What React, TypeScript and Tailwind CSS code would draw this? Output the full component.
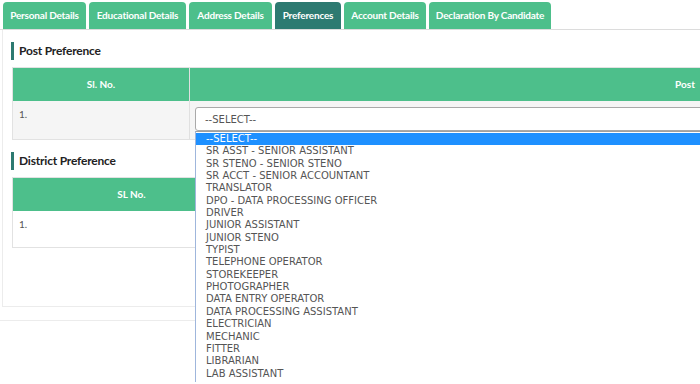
import React from 'react';

const tabs = [
  {label: 'Personal Details', width: 'w-[83px]'},
  {label: 'Educational Details', width: 'w-[97px]'},
  {label: 'Address Details', width: 'w-[83px]'},
  {label: 'Preferences', width: 'w-[66px]', active: true},
  {label: 'Account Details', width: 'w-[82px]'},
  {label: 'Declaration By Candidate', width: 'w-[122px]'}
];

const posts = [
  '--SELECT--',
  'SR ASST - SENIOR ASSISTANT',
  'SR STENO - SENIOR STENO',
  'SR ACCT - SENIOR ACCOUNTANT',
  'TRANSLATOR',
  'DPO - DATA PROCESSING OFFICER',
  'DRIVER',
  'JUNIOR ASSISTANT',
  'JUNIOR STENO',
  'TYPIST',
  'TELEPHONE OPERATOR',
  'STOREKEEPER',
  'PHOTOGRAPHER',
  'DATA ENTRY OPERATOR',
  'DATA PROCESSING ASSISTANT',
  'ELECTRICIAN',
  'MECHANIC',
  'FITTER',
  'LIBRARIAN',
  'LAB ASSISTANT'
];

function SectionTitle({title}: {title: string}) {
  return (
    <div className="-ml-px flex h-[18px] items-center gap-[5px]">
      <div className="h-[18px] w-[3px] bg-[#2d7a71]" />
      <div className="text-[12px] font-bold leading-none tracking-[-0.2px] text-[#222]">{title}</div>
    </div>
  );
}

function PostSelect() {
  return (
    <div className="relative">
      <div className="flex h-[24px] items-center rounded-[3px] border border-[#a9a9a9] bg-white pl-[9px] font-['DejaVu_Sans',sans-serif] text-[10px] text-[#555]">
        --SELECT--
      </div>
      <div className="absolute left-0 top-full z-10 w-full border-l border-t border-l-[#9fb6dc] border-t-[#a0a0a0] bg-white pb-[2px] pt-px font-['DejaVu_Sans',sans-serif] text-[10px] text-[#555]">
        {posts.map((post, i) => (
          <div
            key={post}
            className={`h-[12.35px] pl-[10px] leading-[12.35px] ${
              i === 0 ? 'bg-[#1e90ff] text-white' : ''
            }`}
          >
            {post}
          </div>
        ))}
      </div>
    </div>
  );
}

export default function App() {
  return (
    <div className="relative h-[384px] w-[700px] overflow-hidden bg-white font-['Lato',sans-serif]">
      <div className="flex h-[30px] gap-[3px] border-b border-[#dcdcdc] pl-[3px] pt-[2px]">
        {tabs.map((tab) => (
          <div
            key={tab.label}
            className={`flex h-[27px] shrink-0 items-center justify-center rounded-t-[4px] text-[10px] font-bold tracking-[-0.2px] text-white ${tab.width} ${
              tab.active ? 'bg-[#2d7a71]' : 'bg-[#4dbf8b]'
            }`}
          >
            {tab.label}
          </div>
        ))}
      </div>

      <div className="ml-[2px] h-[277px] w-[1200px] border-b border-l border-[#ececec] pl-[9px] pt-[12px]">
        <SectionTitle title="Post Preference" />
        <div className="mt-[7px] w-[1169px] border border-[#e2e2e2]">
          <div className="flex h-[33px] bg-[#4dbf8b] text-[10px] font-bold text-white">
            <div className="flex w-[177px] items-center justify-center border-r border-[#e0e0e0]">Sl. No.</div>
            <div className="flex flex-1 items-center justify-center">Post</div>
          </div>
          <div className="flex h-[38px] bg-[#f5f5f5] text-[10px] text-[#555]">
            <div className="w-[177px] border-r border-[#e0e0e0] pl-[6px] pt-[6px]">1.</div>
            <div className="flex-1 pl-[5px] pr-[6px] pt-[6px]">
              <PostSelect />
            </div>
          </div>
        </div>

        <div className="mt-[12px]">
          <SectionTitle title="District Preference" />
        </div>
        <div className="mt-[7px] w-[1169px] border border-[#e2e2e2]">
          <div className="flex h-[33px] bg-[#4dbf8b] text-[10px] font-bold text-white">
            <div className="flex w-[238px] items-center justify-center border-r border-[#e0e0e0]">SL No.</div>
            <div className="flex-1" />
          </div>
          <div className="flex h-[36px] bg-white text-[10px] text-[#555]">
            <div className="w-[238px] pl-[6px] pt-[6px]">1.</div>
            <div className="flex-1" />
          </div>
        </div>
      </div>
      <div className="mt-[13px] border-t border-[#ececec]" />
    </div>
  );
}
